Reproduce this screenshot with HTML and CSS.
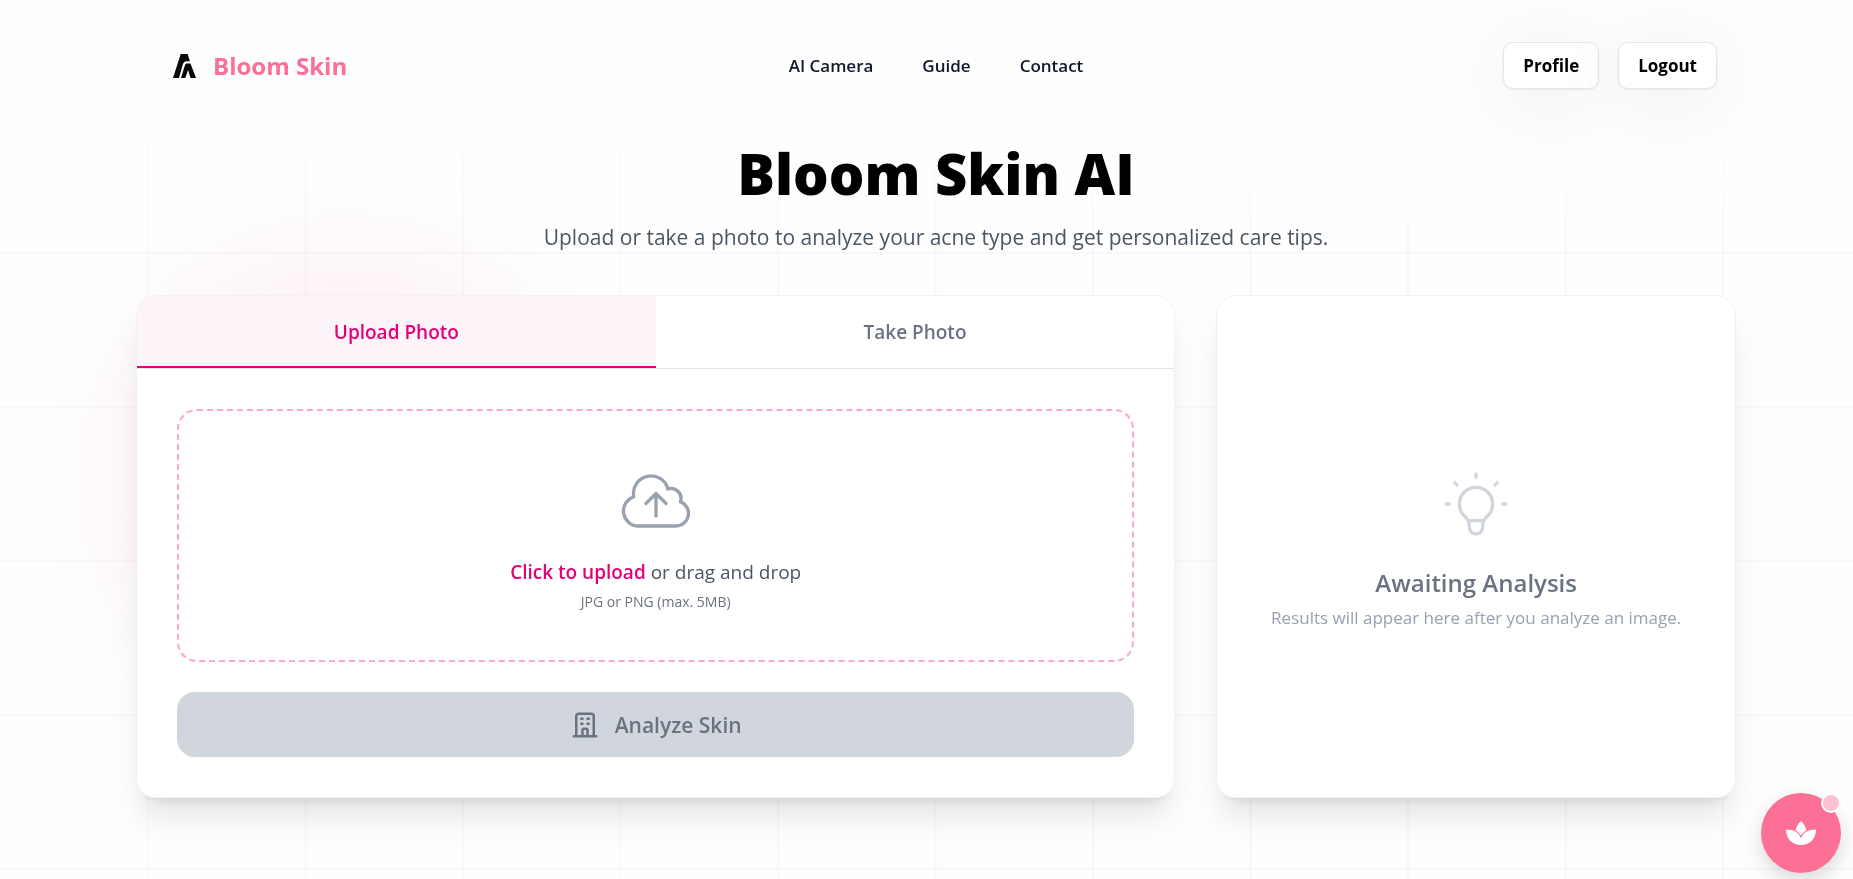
FILE: index.html
```html
<!DOCTYPE html>
<html lang="en">
<head>
<meta charset="utf-8">
<meta name="viewport" content="width=device-width, initial-scale=1">
<title>Bloom Skin AI</title>
<link rel="stylesheet" href="styles.css">
</head>
<body>
<div class="backdrop" aria-hidden="true"><div class="backdrop-grid"></div><div class="backdrop-glow"></div></div>
<div class="page">
  <header class="header">
    <a class="brand" href="#">
      <svg class="brand-mark" viewBox="0 0 24 24" aria-hidden="true"><path d="M7.700 0h7l2.200 7.300h-3.400q-2.700 0-3.600 2.700L6 24H0z"/><path d="M13.400 9.500h4.100L23 24h-5.500l-2.400-8L12.200 24H8l3.700-12Q12.200 9.500 13.400 9.500z"/></svg>
      <span>Bloom Skin</span>
    </a>
    <nav class="nav">
      <a href="#">AI Camera</a>
      <a href="#">Guide</a>
      <a href="#">Contact</a>
    </nav>
    <div class="account">
      <button class="account-button" type="button">Profile</button>
      <button class="account-button" type="button">Logout</button>
    </div>
  </header>
  <main class="main">
    <div class="intro">
      <h1 class="title">Bloom Skin AI</h1>
      <p class="subtitle">Upload or take a photo to analyze your acne type and get personalized care tips.</p>
    </div>
    <div class="panels">
      <section class="card">
        <div class="tabs" role="tablist">
          <button class="tab tab-active" type="button" role="tab" aria-selected="true">Upload Photo</button>
          <button class="tab" type="button" role="tab" aria-selected="false">Take Photo</button>
        </div>
        <div class="card-body">
          <button class="dropzone" type="button">
            <svg class="icon-large icon-cloud" viewBox="0 0 24 24" aria-hidden="true"><path d="M12 16.500V9.750m0 0l3 3m-3-3l-3 3M6.750 19.500a4.500 4.500 0 01-1.410-8.775 5.250 5.250 0 0110.233-2.330 3 3 0 013.758 3.848A3.752 3.752 0 0118 19.500H6.750z"/></svg>
            <span class="drop-text"><strong>Click to upload</strong> or drag and drop</span>
            <span class="drop-hint">JPG or PNG (max. 5MB)</span>
          </button>
          <button class="analyze" type="button" disabled>
            <svg class="icon-building" viewBox="0 0 24 24" aria-hidden="true"><path d="M19 21V5a2 2 0 00-2-2H7a2 2 0 00-2 2v16m14 0h2m-2 0h-5m-9 0H3m2 0h5M9 7h1m-1 4h1m4-4h1m-1 4h1m-5 10v-5a1 1 0 011-1h2a1 1 0 011 1v5m-4 0h4"/></svg>
            <span>Analyze Skin</span>
          </button>
        </div>
      </section>
      <section class="card results">
        <svg class="icon-large icon-bulb" viewBox="0 0 24 24" aria-hidden="true"><path d="M9.663 17h4.673M12 3v1m6.364 1.636l-.707.707M21 12h-1M4 12H3m3.343-5.657l-.707-.707m2.828 9.900a5 5 0 117.072 0l-.548.547A3.374 3.374 0 0014 18.469V19a2 2 0 11-4 0v-.531c0-.895-.356-1.754-.988-2.386l-.548-.547z"/></svg>
        <h2 class="results-title">Awaiting Analysis</h2>
        <p class="results-text">Results will appear here after you analyze an image.</p>
      </section>
    </div>
  </main>
</div>
<button class="chat" type="button" aria-label="Open assistant">
  <svg class="chat-icon" viewBox="0 0 32 26" aria-hidden="true"><path d="M16 1c3.200 3 5 6.500 5.400 9.200Q18 12.500 16 15.500 14 12.500 10.600 10.200C11 7.500 12.800 4 16 1z"/><path d="M1 9.500c8 0 13 3 15 9 2-6 7-9 15-9 0 9-6 15.500-15 15.500S1 18.500 1 9.500z"/></svg>
  <span class="chat-badge"></span>
</button>
</body>
</html>
```
FILE: styles.css
```css
* {
  box-sizing: border-box;
}

body {
  margin: 0;
  min-height: 100vh;
  background: #fefefe;
  color: #000;
  font-family: "Open Sans", "Noto Sans", sans-serif;
  overflow-x: hidden;
}

h1, h2, p {
  margin: 0;
}

a {
  color: inherit;
  text-decoration: none;
}

button {
  margin: 0;
  border: 0;
  font-family: inherit;
}

svg {
  display: block;
  flex: none;
}

.backdrop {
  position: fixed;
  inset: 0;
  z-index: -1;
}

.backdrop-grid {
  position: absolute;
  inset: 98px 0 0;
  background-image: linear-gradient(to right, #f8f8f8 2px, transparent 2px), linear-gradient(to bottom, #f8f8f8 2px, transparent 2px);
  background-size: 157.500px 154px;
  background-position: 147px 0;
  mask-image: linear-gradient(to bottom, transparent 2px, #000 160px);
}

.backdrop-glow {
  position: absolute;
  left: 45px;
  top: 180px;
  width: 600px;
  height: 600px;
  border-radius: 50%;
  background: radial-gradient(closest-side, rgba(251, 170, 210, 0.300), rgba(251, 190, 215, 0.160) 60%, transparent);
}

.page {
  padding-left: 19px;
}

.header {
  display: grid;
  grid-template-columns: 1fr auto 1fr;
  align-items: center;
  max-width: 1562px;
  margin: 0 auto;
  padding: 42px 0;
}

.brand {
  display: flex;
  align-items: center;
  gap: 16px;
  padding-left: 18px;
  color: #fb7094;
  font-size: 24px;
  line-height: 32px;
  font-weight: 700;
}

.brand-mark {
  width: 24px;
  height: 24px;
  fill: #0a0a0a;
}

.nav {
  display: flex;
  gap: 49px;
  color: #111827;
  font-size: 17px;
  line-height: 24px;
  font-weight: 600;
}

.account {
  display: flex;
  justify-content: flex-end;
  gap: 19px;
}

.account-button {
  height: 47px;
  padding: 0 19px;
  border: 1px solid #e6e6e6;
  border-radius: 10px;
  background: #fff;
  color: #000;
  font-size: 17px;
  font-weight: 700;
  box-shadow: 0 1px 3px rgba(0, 0, 0, 0.080), 0 10px 80px rgba(0, 0, 0, 0.080);
}

.main {
  max-width: 1600px;
  margin: 0 auto;
  padding: 6px 0 40px;
}

.intro {
  text-align: center;
}

.title {
  font-size: 56px;
  line-height: 72px;
  font-weight: 800;
}

.subtitle {
  margin-top: 10px;
  color: #4b5563;
  font-size: 21px;
  line-height: 36px;
}

.panels {
  display: grid;
  grid-template-columns: 2fr 1fr;
  gap: 41px;
  margin-top: 40px;
}

.card {
  overflow: hidden;
  border: 1px solid #f1f2f4;
  border-radius: 20px;
  background: rgba(255, 255, 255, 0.980);
  box-shadow: 0 25px 31px -6px rgba(0, 0, 0, 0.100), 0 10px 12px -8px rgba(0, 0, 0, 0.100);
}

.tabs {
  display: grid;
  grid-template-columns: 1fr 1fr;
  border-bottom: 1px solid #e5e7eb;
}

.tab {
  height: 72px;
  padding: 2px 0 0;
  border-bottom: 2px solid transparent;
  background: transparent;
  color: #6b7280;
  font-size: 19px;
  font-weight: 600;
}

.tab-active {
  border-color: #e60076;
  background: #fdf4fa;
  color: #e60076;
}

.card-body {
  display: flex;
  flex-direction: column;
  gap: 30px;
  padding: 40px;
}

.dropzone {
  display: flex;
  flex-direction: column;
  align-items: center;
  padding: 50px 40px 46px;
  border: 2px dashed #fda5d5;
  border-radius: 20px;
  background: transparent;
}

.icon-large {
  width: 80px;
  height: 80px;
  fill: none;
  stroke-width: 1;
  stroke-linecap: round;
  stroke-linejoin: round;
}

.icon-cloud {
  stroke: #99a1af;
}

.icon-bulb {
  stroke: #d1d5dc;
}

.drop-text {
  margin-top: 14px;
  color: #4b5563;
  font-size: 19px;
  line-height: 34px;
}

.drop-text strong {
  color: #e60076;
  font-weight: 600;
}

.drop-hint {
  color: #6b7280;
  font-size: 14px;
  line-height: 25px;
}

.analyze {
  display: flex;
  align-items: center;
  justify-content: center;
  gap: 15px;
  height: 65px;
  border-radius: 18px;
  background: #d1d5dc;
  color: #6b7280;
  font-size: 21px;
  font-weight: 600;
}

.icon-building {
  width: 30px;
  height: 30px;
  fill: none;
  stroke: currentColor;
  stroke-width: 2;
  stroke-linecap: round;
  stroke-linejoin: round;
}

.results {
  display: flex;
  flex-direction: column;
  align-items: center;
  justify-content: center;
  padding: 46px 40px 40px;
  text-align: center;
}

.results-title {
  margin-top: 21px;
  color: #6b7280;
  font-size: 24px;
  line-height: 36px;
  font-weight: 600;
}

.results-text {
  color: #99a1af;
  font-size: 17px;
  line-height: 34px;
}

.chat {
  position: fixed;
  right: 12px;
  bottom: 6px;
  display: grid;
  place-items: center;
  width: 80px;
  height: 80px;
  padding: 0;
  border-radius: 50%;
  background: #fd7095;
  box-shadow: 0 8px 20px rgba(0, 0, 0, 0.150);
}

.chat-icon {
  width: 32px;
  height: 26px;
  fill: #fff;
}

.chat-badge {
  position: absolute;
  top: 0;
  right: 0;
  width: 20px;
  height: 20px;
  border: 2px solid #fff;
  border-radius: 50%;
  background: #fec1d1;
}
```
